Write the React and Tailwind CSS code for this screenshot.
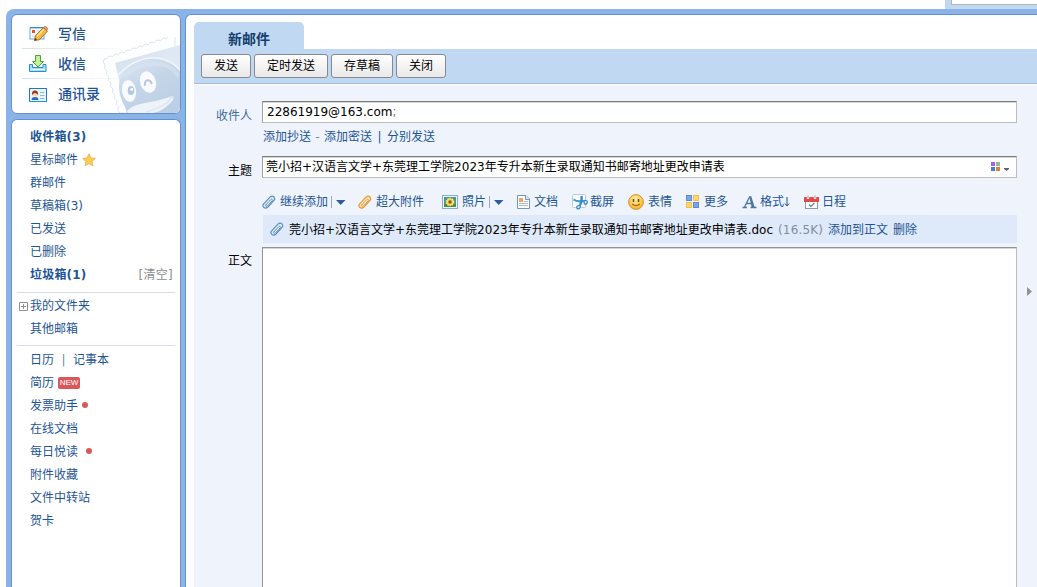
import React from 'react';

function ComposeIcon() {
  return (
    <svg width="20" height="18" viewBox="0 0 20 18">
      <rect x="1" y="3" width="14" height="11" fill="#fff" stroke="#5aa9dc" />
      <path d="M1 2.5h14" stroke="#2f8fd0" />
      <rect x="3" y="5" width="3" height="3" fill="#e8502c" />
      <path d="M8 6h4M3 11h3" stroke="#b9cfe6" />
      <path d="M5.500 15.500l1-5 8-8 4 3.700-8.200 8.600z" fill="#f9b73c" stroke="#a8641c" strokeWidth=".9" />
      <path d="M8 11.500l7.200-7.600" stroke="#ffe38c" strokeWidth="1.600" />
      <path d="M14.200 2.800l1.600-1.400q1.800 0 3 2.400l-1.200 1.700z" fill="#f2935f" stroke="#b85a3a" strokeWidth=".7" />
      <path d="M5.300 15.700l.9-3 2 2.200z" fill="#5b4632" />
    </svg>
  );
}
function InboxIcon() {
  return (
    <svg width="20" height="18" viewBox="0 0 20 18">
      <path d="M1.500 9.500h3v3h10.500v-3h3v7H1.500z" fill="#a8dcf6" stroke="#2690cc" />
      <path d="M2.500 14.500h14.500" stroke="#e0f5ff" />
      <path d="M7.500.500h5v6h3l-5.500 5.500-5.500-5.500h3z" fill="#c5ee9c" stroke="#4ba52f" />
    </svg>
  );
}
function ContactsIcon() {
  return (
    <svg width="20" height="16" viewBox="0 0 20 16">
      <rect x="1.500" y="1.500" width="17" height="13" fill="#e9f6fd" stroke="#2478bd" />
      <path d="M1 14.500h18" stroke="#1598dc" />
      <path d="M3.500 13q0-3 3.500-3t3.500 3z" fill="#226dbd" />
      <circle cx="7" cy="7.200" r="2.400" fill="#ffd4ac" />
      <path d="M4.100 8.500Q3.300 3.600 7 3.500t3 5Q9.500 5.800 7 5.900T4.100 8.500z" fill="#8f3d20" />
      <path d="M6.200 10l.8 2 .8-2z" fill="#e84f35" />
      <path d="M12 5.500h4.500M12 8.500h4.500M12 11.500h4.500" stroke="#8bbbe1" />
    </svg>
  );
}
function StampArt() {
  return (
    <svg className="absolute bottom-0 right-0" width="78" height="76" viewBox="0 0 78 76">
      <defs>
        <linearGradient id="stamp" x1="0" y1="0" x2="1" y2="1">
          <stop offset="0" stopColor="#d6e2f0" />
          <stop offset="1" stopColor="#e6edf6" />
        </linearGradient>
        <linearGradient id="head" x1="0" y1="0" x2=".6" y2="1">
          <stop offset="0" stopColor="#dde7f3" />
          <stop offset=".5" stopColor="#c6d6e9" />
          <stop offset="1" stopColor="#bccfe4" />
        </linearGradient>
      </defs>
      <path
        d="M18 76q-4-3-1-6-4-2-2-6-4-2-2-6-4-2-2-6-4-2-2-6-4-2-2-6-4-2-2-6-4-2-2-6-3-3-1-6 4 0 5-3 4 2 6-2 4 2 6-2 4 2 6-2 4 2 6-2 4 2 6-2 4 2 6-2 4 2 6-2 4 2 6-2 4 2 6-2 4 2 6-2 3 1 6-2V76z"
        fill="#fdfeff"
        stroke="#dde6f1"
      />
      <path d="M25 76L13 26 78 8V76z" fill="url(#stamp)" />
      <path d="M23 70Q10 46 25 32T58 22q12 3 20 12V76H25z" fill="url(#head)" />
      <path d="M16 38Q34 19 56 21q13 2 22 12" fill="none" stroke="#f3f7fb" strokeWidth="1.300" />
      <path d="M22 40Q36 26 54 27T76 40" fill="none" stroke="#dbe6f2" strokeWidth="4" opacity=".5" />
      <ellipse cx="27" cy="54" rx="7" ry="11" fill="#f8fafd" transform="rotate(-10 27 54)" />
      <ellipse cx="46" cy="45" rx="7.800" ry="11" fill="#f8fafd" transform="rotate(-18 46 45)" />
      <ellipse cx="29" cy="53.500" rx="3.300" ry="4.500" fill="#b4c9e0" />
      <circle cx="29.800" cy="52.500" r="1.400" fill="#fff" />
      <path d="M42.800 48q0-4.500 2.800-4.700t4 3" fill="none" stroke="#b4c9e0" strokeWidth="2" strokeLinecap="round" />
      <path d="M25 74q5-6 18-8t28-7q2 4-5 9-4 5-15 8H26z" fill="#edf3f9" />
      <path d="M44 75q12-3 21-9l6-7" fill="none" stroke="#dbe5f1" strokeWidth="1.500" />
    </svg>
  );
}
function Clip({ color = '#5d8fbe', light = '#dbeaf8' }) {
  return (
    <svg width="14" height="14" viewBox="0 0 14 14" fill="none" stroke={color} strokeWidth="1.200" strokeLinecap="round" strokeLinejoin="round">
      <path d="M1.200 9.400L8 2.200q2-2 3.900-.4 1.700 1.900-.1 3.900L6 12q-2.200 1.900-4 .5-1.600-1.400-.8-3.100z" fill={light} />
      <path d="M4 9.800l4.700-5q1-.9 1.500-.3.600.6-.2 1.500L5.400 10.900q-.9.800-1.400.3-.5-.6 0-1.400z" fill="#fff" strokeWidth="1" />
    </svg>
  );
}
function PhotoIcon() {
  return (
    <svg width="16" height="14" viewBox="0 0 16 14">
      <rect x=".5" y=".5" width="15" height="13" fill="#edf4fb" stroke="#8eaccb" />
      <rect x="2" y="2" width="12" height="10" fill="#4e9690" />
      <path d="M2 9h12v3H2z" fill="#4f8f3c" />
      <circle cx="8" cy="7" r="3.600" fill="#ffd83c" stroke="#f6ef9a" strokeWidth="1.300" strokeDasharray="1.300 1" />
      <circle cx="8" cy="7" r="1.700" fill="#8a5417" />
    </svg>
  );
}
function DocIcon() {
  return (
    <svg width="14" height="14" viewBox="0 0 14 14">
      <path d="M.5.500h8.500l3.500 3.500v9.500H.5z" fill="#fff" stroke="#7593bd" />
      <path d="M8.500.500V4.500h4" fill="#dfe9f5" stroke="#7593bd" />
      <rect x="2" y="3" width="4" height="4" fill="#f3a566" />
      <path d="M7 6.500h4M2 8.500h9M2 10.500h9" stroke="#a7bbd6" />
    </svg>
  );
}
function ShotIcon() {
  return (
    <svg width="16" height="16" viewBox="0 0 16 16">
      <rect x=".5" y=".5" width="13" height="13" rx="1" fill="#fff" stroke="#b4cce2" />
      <path d="M1.500 5.500q3 2.500 11 1.500" fill="none" stroke="#3a9bd8" strokeWidth="2.200" />
      <path d="M9.500 2q.8 5-1.500 9" fill="none" stroke="#2f86c8" strokeWidth="2.200" />
      <path d="M12 6.500q3.500-.5 3.300 1.800t-3 1.600z" fill="#dff0fb" stroke="#2f86c8" strokeWidth="1.200" />
      <path d="M8.200 11q.5 3.800-1.800 3.800t-1.400-2.600z" fill="#dff0fb" stroke="#2f86c8" strokeWidth="1.200" />
    </svg>
  );
}
function SmileIcon() {
  return (
    <svg width="16" height="16" viewBox="0 0 16 16">
      <defs>
        <radialGradient id="smile" cx=".45" cy=".3" r=".7">
          <stop offset="0" stopColor="#fff0a0" />
          <stop offset="1" stopColor="#f5b028" />
        </radialGradient>
      </defs>
      <circle cx="8" cy="8" r="7.400" fill="url(#smile)" stroke="#d89432" />
      <path d="M5.500 5v3M10.500 5v3" stroke="#754813" strokeWidth="1.500" />
      <path d="M4.200 9.800q3.800 3.400 7.600 0" fill="none" stroke="#965a17" strokeWidth="1.100" />
    </svg>
  );
}
function MoreIcon() {
  return (
    <svg width="14" height="14" viewBox="0 0 14 14">
      <rect x=".5" y=".5" width="5" height="5" fill="#79a7e4" stroke="#5b8ccb" />
      <rect x="7.500" y=".5" width="5" height="5" fill="#ffd766" stroke="#f3bf4a" />
      <rect x=".5" y="7.500" width="5" height="5" fill="#ffd766" stroke="#f3bf4a" />
      <rect x="7.500" y="7.500" width="5" height="5" fill="#79a7e4" stroke="#5b8ccb" />
    </svg>
  );
}
function FormatIcon() {
  return (
    <svg width="15" height="14" viewBox="0 0 15 14">
      <path d="M.5 12.500H5M8.500 12.500h6M2.500 12L7.800 1.500M4.500 8.500h6" stroke="#52779f" strokeWidth="1.300" fill="none" />
      <path d="M7.200 1.200h2.100l3.400 11H9.600z" fill="#52779f" />
    </svg>
  );
}
function CalendarIcon() {
  return (
    <svg width="15" height="15" viewBox="0 0 15 15">
      <rect x="1.500" y="2.500" width="12" height="11" fill="#fff" stroke="#8b98aa" />
      <path d="M0 2h15v5H0z" fill="#e24a48" />
      <path d="M4 1v3M11 1v3" stroke="#fff" strokeWidth="2.400" />
      <path d="M4 .500v3M11 .500v3" stroke="#8d95a0" />
      <path d="M5 9.500l2 2 3.500-3.500" fill="none" stroke="#667891" strokeWidth="1.200" />
    </svg>
  );
}
function SplitArrow() {
  return (
    <span className="ml-[3px] flex items-center gap-1">
      <span className="h-3 w-px bg-[#9da9b8]" />
      <svg width="10" height="5" viewBox="0 0 10 5"><path d="M0 0h9.500L4.700 5z" fill="#2d5c9e" /></svg>
    </span>
  );
}

function Tool({ icon, label, className, gap = 'gap-1', split }) {
  return (
    <div className={'flex shrink-0 items-center ' + className}>
      <span className={'flex items-center ' + gap}>
        {icon}
        <span className="leading-4">{label}</span>
      </span>
      {split && <SplitArrow />}
    </div>
  );
}

function Row({ children, bold }) {
  return (
    <div className={'flex h-[23px] items-center whitespace-nowrap pl-[18px] ' + (bold ? 'font-bold' : '')}>
      {children}
    </div>
  );
}
const Dot = ({ className }) => <span className={'mb-0.5 size-1.5 rounded-full bg-[#dc5858] ' + className} />;

function Sidebar() {
  const links = 'flex h-[30px] items-center text-sm font-medium';
  return (
    <aside className="flex w-[170px] shrink-0 flex-col gap-[5px]">
      <div className="relative h-[100px] overflow-hidden rounded-md border border-[#6490cb] bg-white">
        <StampArt />
        <nav className="relative pl-2.5 pt-1">
          <div className={links}><span className="ml-[7px] w-[29px]"><ComposeIcon /></span>写信</div>
          <div className="-mt-px h-px w-[110px] bg-gradient-to-r from-[#d5e1f1] to-transparent" />
          <div className={links}><span className="ml-1.5 w-[30px]"><InboxIcon /></span>收信</div>
          <div className="-mt-px h-px w-[110px] bg-gradient-to-r from-[#d5e1f1] to-transparent" />
          <div className={links}><span className="ml-1.5 w-[30px] pt-px"><ContactsIcon /></span>通讯录</div>
        </nav>
      </div>
      <div className="flex-1 rounded-t-md border border-b-0 border-[#6490cb] bg-white pt-[5px]">
        <Row bold><span className="tracking-[0.2px]">收件箱(3)</span></Row>
        <Row>
          星标邮件
          <svg className="ml-1" width="14" height="14" viewBox="0 0 14 14">
            <path d="M7 .8l1.900 4.100 4.400.5L10 8.400l.9 4.400L7 10.600l-3.900 2.200L4 8.400.7 5.400l4.400-.5z" fill="#ffcb4f" stroke="#e9a94a" strokeWidth=".8" />
          </svg>
        </Row>
        <Row>群邮件</Row>
        <Row>草稿箱(3)</Row>
        <Row>已发送</Row>
        <Row>已删除</Row>
        <Row bold>
          <span className="tracking-[0.2px]">垃圾箱(1)</span>
          <span className="ml-auto mr-[7px] font-normal tracking-[0.3px] text-[#8d8d8d]">[清空]</span>
        </Row>
        <div className="mx-[5px] mb-px mt-[6px] h-px bg-[#d6dde8]" />
        <div className="flex h-[23px] items-center pl-[7px]">
          <svg width="9" height="9" viewBox="0 0 9 9" className="mr-[2px] mt-0.5">
            <path d="M.5.5h8v8h-8zM2 4.500h5M4.500 2v5" fill="none" stroke="#8f8f8f" />
          </svg>
          我的文件夹
        </div>
        <Row>其他邮箱</Row>
        <div className="mx-[5px] mb-[2px] mt-[5px] h-px bg-[#d6dde8]" />
        <Row>日历<span className="mx-[7px] w-[5px] text-center text-[#6785ae]">|</span>记事本</Row>
        <Row>
          简历
          <span className="ml-1 flex h-3 w-[22px] items-center justify-center rounded-[2px] bg-[#d9575a] font-['Liberation_Sans'] text-[8px] text-white">NEW</span>
        </Row>
        <Row>发票助手<Dot className="ml-1" /></Row>
        <Row>在线文档</Row>
        <Row>每日悦读<Dot className="ml-2" /></Row>
        <Row>附件收藏</Row>
        <Row>文件中转站</Row>
        <Row>贺卡</Row>
      </div>
    </aside>
  );
}

function Btn({ children, className }) {
  return (
    <button className={'h-6 rounded-[3px] border border-[#868a90] bg-gradient-to-b from-white to-[#e9e9e9] text-center text-black ' + className}>
      {children}
    </button>
  );
}

const field = 'border border-[#bdbdbd] border-l-[#a0a0a0] border-t-[#7c7c7c] bg-white text-black shadow-[inset_0_1px_0_#d5d5d5]';
const subject = '莞小招+汉语言文学+东莞理工学院2023年专升本新生录取通知书邮寄地址更改申请表';

function Compose() {
  return (
    <main className="flex min-w-0 flex-1 flex-col rounded-tl-md border-l border-t border-[#6490cb] bg-white pl-2 pt-[7px]">
      <div className="h-[27px] w-[110px] rounded-t-[5px] bg-[#c1d8f2] pt-[7px] text-center text-sm font-bold leading-5 text-[#13406f]">新邮件</div>
      <div className="flex h-[35px] items-start gap-[3px] border-b border-[#a4bddd] bg-[#c1d8f2] pl-[7px] pt-[5px]">
        <Btn className="w-[50px]">发送</Btn>
        <Btn className="w-[74px]">定时发送</Btn>
        <Btn className="w-[62px]">存草稿</Btn>
        <Btn className="w-[50px]">关闭</Btn>
      </div>
      <div className="mt-px flex min-h-0 flex-1 bg-[#eff4fc] pt-4">
        <div className="flex w-[68px] shrink-0 flex-col items-end pr-2.5 leading-4">
          <span className="pt-[7px] text-[#44699a]">收件人</span>
          <span className="mt-[39px] text-black">主题</span>
          <span className="mt-[74px] text-black">正文</span>
        </div>
        <div className="flex w-[755px] shrink-0 flex-col">
          <div className={'h-[22px] pl-1 leading-[20px] ' + field}>22861919@163.com<span className="text-[#808080]">;</span></div>
          <div className="mt-[6px] flex h-4 items-center pl-px">
            添加抄送<span className="w-[13px] text-center text-[#6785ae]">-</span>添加密送<span className="w-[15px] text-center">|</span>分别发送
          </div>
          <div className={'mt-[11px] flex h-[22px] items-center pl-[3px] ' + field}>
            <span className="leading-[18px]">{subject}</span>
            <svg className="ml-auto mr-1.5" width="20" height="11" viewBox="0 0 20 11">
              <path d="M1 0h4v4H1z" fill="#a95fee" />
              <path d="M6 0h4v4H6z" fill="#89bba7" />
              <path d="M1 5h4v4H1z" fill="#3e7fdc" />
              <path d="M6 5h4v4H6z" fill="#ea7d35" />
              <path d="M14 6h5v1l-2.500 2L14 7z" fill="#4c6585" />
            </svg>
          </div>
          <div className="mt-[15px] flex h-[18px] items-center">
            <Tool className="w-24" icon={<Clip />} label="继续添加" split />
            <Tool className="w-[84px]" icon={<Clip color="#e4963c" light="#ffe5a8" />} label="超大附件" />
            <Tool className="w-[75px]" icon={<PhotoIcon />} label="照片" split />
            <Tool className="w-[55px]" icon={<DocIcon />} label="文档" gap="gap-[3px]" />
            <Tool className="w-14" icon={<ShotIcon />} label="截屏" gap="gap-0.5" />
            <Tool className="w-[58px]" icon={<SmileIcon />} label="表情" />
            <Tool className="w-14" icon={<MoreIcon />} label="更多" />
            <Tool className="w-[62px]" icon={<FormatIcon />} label={<span className="flex items-center">格式<svg width="6" height="10" viewBox="0 0 6 10"><path d="M3 0v8.500M.8 6.500L3 9l2.200-2.500" fill="none" stroke="#1e5494" /></svg></span>} gap="gap-[3px]" />
            <Tool className="w-14" icon={<CalendarIcon />} label="日程" gap="gap-[3px]" />
          </div>
          <div className="ml-px mt-[4px] flex h-7 items-center whitespace-nowrap bg-[#deeafa] pl-[7px] text-black">
            <Clip />
            <span className="ml-[5px] pb-px pt-0.5">{subject}.doc</span>
            <span className="ml-[5px] pt-px tracking-[0.15px] text-[#858e9c]">(16.5K)</span>
            <span className="ml-[5px] pt-px text-[#1e5494]">添加到正文</span>
            <span className="ml-[5px] pt-px text-[#1e5494]">删除</span>
          </div>
          <div className="mt-1 flex-1 border border-b-0 border-[#bdbdbd] border-l-[#929292] border-t-[#929292] bg-white shadow-[inset_0_1px_0_#d5d5d5]" />
        </div>
        <div className="flex flex-1 justify-end pr-[5px] pt-[186px]">
          <svg width="5" height="9" viewBox="0 0 5 9"><path d="M0 0l5 4.500L0 9z" fill="#929292" /></svg>
        </div>
      </div>
    </main>
  );
}

export default function App() {
  return (
    <div className="flex h-[587px] w-[1037px] flex-col overflow-hidden bg-white font-['DejaVu_Sans','Noto_Sans_CJK_SC',sans-serif] text-[12px] text-[#1e5494]">
      <header className="flex h-[9px] shrink-0 justify-end">
        <div className="h-[9px] w-[92px] bg-[#c1d8f2] pl-1.5">
          <div className="h-[5px] border-b border-l border-[#b5b5b5] bg-white" />
        </div>
      </header>
      <div className="ml-1.5 flex min-h-0 flex-1 gap-1 rounded-tl-lg bg-[#8ab4e8] pl-[5px] pt-[5px]">
        <Sidebar />
        <Compose />
      </div>
    </div>
  );
}
